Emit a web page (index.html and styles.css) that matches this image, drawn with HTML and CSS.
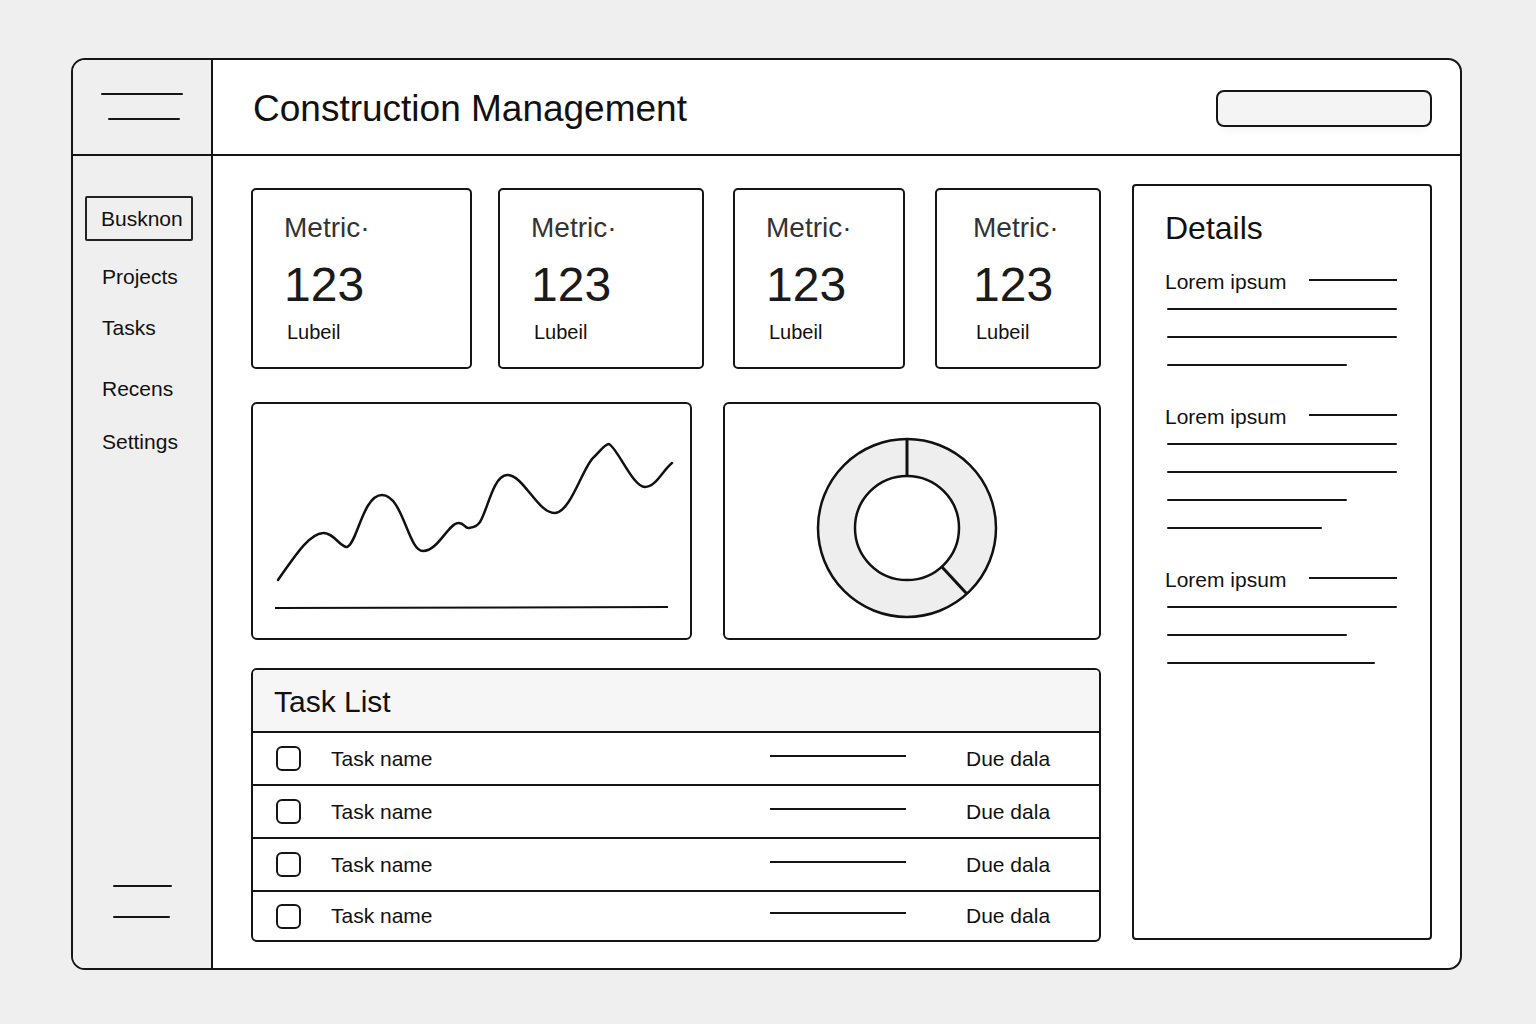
FILE: index.html
```html
<!DOCTYPE html>
<html lang="en">
<head>
<meta charset="utf-8">
<title>Construction Management</title>
<link rel="stylesheet" href="styles.css">
</head>
<body>
<div class="frame">
  <div class="side-top">
    <div class="hline hl-1"></div>
    <div class="hline hl-2"></div>
  </div>
  <header class="header">
    <h1 class="title">Construction Management</h1>
    <div class="search"></div>
  </header>
  <nav class="side-nav">
    <div class="nav-active">Busknon</div>
    <div class="nav-item">Projects</div>
    <div class="nav-item">Tasks</div>
    <div class="nav-item">Recens</div>
    <div class="nav-item">Settings</div>
    <div class="side-bottom">
      <div class="hline bl-1"></div>
      <div class="hline bl-2"></div>
    </div>
  </nav>
  <main class="content">
    <div class="left-col">
      <div class="metrics">
        <div class="metric m1">
          <div class="m-label">Metric·</div>
          <div class="m-value">123</div>
          <div class="m-sub">Lubeil</div>
        </div>
        <div class="metric m2">
          <div class="m-label">Metric·</div>
          <div class="m-value">123</div>
          <div class="m-sub">Lubeil</div>
        </div>
        <div class="metric m3">
          <div class="m-label">Metric·</div>
          <div class="m-value">123</div>
          <div class="m-sub">Lubeil</div>
        </div>
        <div class="metric m4">
          <div class="m-label">Metric·</div>
          <div class="m-value">123</div>
          <div class="m-sub">Lubeil</div>
        </div>
      </div>
      <div class="charts">
        <div class="card chart-line">
          <svg viewBox="0 0 437 234" width="437" height="234">
            <path d="M25,176 C40,155 55,130 70,129 C80,128 88,144 94,143 C104,140 110,91 129,91 C150,91 155,147 170,147 C185,147 195,120 205,119 C211,118 212,125 216,124 C222,123 224,122 227,118 C235,105 240,72 254,71 C270,70 285,110 302,109 C318,108 330,62 341,53 C348,46 352,40 356,40 C365,45 380,83 392,83 C403,83 410,66 419,59" fill="none" stroke="#111" stroke-width="2.5" stroke-linecap="round" stroke-linejoin="round"/>
            <line x1="22" y1="204" x2="415" y2="203" stroke="#111" stroke-width="2"/>
          </svg>
        </div>
        <div class="card chart-donut">
          <svg viewBox="0 0 374 234" width="374" height="234">
            <circle cx="182" cy="124" r="70.5" fill="none" stroke="#eeeeee" stroke-width="37"/>
            <circle cx="182" cy="124" r="89" fill="none" stroke="#111" stroke-width="2.5"/>
            <circle cx="182" cy="124" r="52" fill="#fff" stroke="#111" stroke-width="2.5"/>
            <line x1="182" y1="72" x2="182" y2="35" stroke="#111" stroke-width="3"/>
            <line x1="217" y1="163" x2="242" y2="190" stroke="#111" stroke-width="3"/>
          </svg>
        </div>
      </div>
      <div class="tasks">
        <div class="tasks-head">Task List</div>
        <div class="task-row">
          <span class="check"></span>
          <span class="task-name">Task name</span>
          <span class="task-line"></span>
          <span class="task-due">Due dala</span>
        </div>
        <div class="task-row">
          <span class="check"></span>
          <span class="task-name">Task name</span>
          <span class="task-line"></span>
          <span class="task-due">Due dala</span>
        </div>
        <div class="task-row">
          <span class="check"></span>
          <span class="task-name">Task name</span>
          <span class="task-line"></span>
          <span class="task-due">Due dala</span>
        </div>
        <div class="task-row">
          <span class="check"></span>
          <span class="task-name">Task name</span>
          <span class="task-line"></span>
          <span class="task-due">Due dala</span>
        </div>
      </div>
    </div>
    <aside class="details">
      <h2 class="details-title">Details</h2>
      <section class="d-section">
        <div class="d-head"><span>Lorem ipsum</span><span class="d-rule"></span></div>
        <div class="d-line full first"></div>
        <div class="d-line full"></div>
        <div class="d-line w180"></div>
      </section>
      <section class="d-section">
        <div class="d-head"><span>Lorem ipsum</span><span class="d-rule"></span></div>
        <div class="d-line full first"></div>
        <div class="d-line full"></div>
        <div class="d-line w180"></div>
        <div class="d-line w155"></div>
      </section>
      <section class="d-section">
        <div class="d-head"><span>Lorem ipsum</span><span class="d-rule"></span></div>
        <div class="d-line full first"></div>
        <div class="d-line w180"></div>
        <div class="d-line w208"></div>
      </section>
    </aside>
  </main>
</div>
</body>
</html>
```
FILE: styles.css
```css
* { box-sizing: border-box; }

html, body {
  margin: 0;
  padding: 0;
  background: #efefef;
  font-family: "Liberation Sans", Arial, sans-serif;
  color: #111;
}

.frame {
  margin: 58px 0 0 71px;
  width: 1391px;
  height: 912px;
  border: 2px solid #151515;
  border-radius: 14px;
  overflow: hidden;
  display: grid;
  grid-template-columns: 140px 1fr;
  grid-template-rows: 96px 1fr;
  background: #fff;
}

.hline {
  height: 2px;
  background: #151515;
  border-radius: 1px;
}

/* sidebar */
.side-top {
  background: #efefef;
  border-right: 2px solid #151515;
  border-bottom: 2px solid #151515;
  padding-top: 33px;
}
.hl-1 { width: 82px; margin-left: 28px; }
.hl-2 { width: 72px; margin-left: 35px; margin-top: 23px; }

.side-nav {
  background: #efefef;
  border-right: 2px solid #151515;
  display: flex;
  flex-direction: column;
  padding-top: 40px;
  padding-bottom: 50px;
}
.nav-active {
  margin-left: 12px;
  width: 108px;
  height: 45px;
  border: 2px solid #222;
  border-radius: 2px;
  font-size: 21px;
  line-height: 41px;
  padding-left: 14px;
}
.nav-item {
  font-size: 21px;
  line-height: 24px;
  padding-left: 29px;
}
.nav-item.n1 { margin-top: 24px; }
.nav-active + .nav-item { margin-top: 24px; }
.nav-active + .nav-item + .nav-item { margin-top: 27px; }
.nav-active + .nav-item + .nav-item + .nav-item { margin-top: 37px; }
.nav-active + .nav-item + .nav-item + .nav-item + .nav-item { margin-top: 29px; }

.side-bottom {
  margin-top: auto;
}
.bl-1 { width: 59px; margin-left: 40px; }
.bl-2 { width: 57px; margin-left: 40px; margin-top: 29px; }

/* header */
.header {
  border-bottom: 2px solid #151515;
  display: flex;
  align-items: center;
  justify-content: space-between;
  padding: 0 29px 0 40px;
}
.title {
  margin: 4px 0 0;
  font-size: 37px;
  font-weight: 400;
}
.search {
  width: 216px;
  height: 37px;
  border: 2px solid #151515;
  border-radius: 8px;
  background: #f4f4f4;
  margin-top: 2px;
  box-shadow: 0 10px 8px -6px rgba(0,0,0,0.04);
}

/* content */
.content {
  display: flex;
  gap: 31px;
  padding: 32px 29px 0 38px;
}
.left-col {
  width: 850px;
  display: flex;
  flex-direction: column;
}

.metrics {
  display: flex;
  height: 181px;
}
.metric {
  border: 2px solid #151515;
  border-radius: 5px;
  padding: 24px 0 0 31px;
  display: flex;
  flex-direction: column;
}
.m1 { width: 221px; }
.m2 { width: 206px; margin-left: 26px; }
.m3 { width: 172px; margin-left: 29px; }
.m4 { width: 166px; margin-left: 30px; padding-left: 36px; }
.m-label {
  font-size: 28px;
  line-height: 28px;
  color: #333;
}
.m-value {
  font-size: 48px;
  line-height: 56px;
  margin-top: 15px;
  color: #1a1a1a;
}
.m-sub {
  font-size: 20px;
  line-height: 24px;
  margin-top: 7px;
  padding-left: 3px;
}

.charts {
  display: flex;
  justify-content: space-between;
  margin-top: 33px;
  height: 238px;
}
.card {
  border: 2px solid #151515;
  border-radius: 6px;
  background: #fff;
}
.card svg { display: block; }
.chart-line { width: 441px; }
.chart-donut { width: 378px; }

.tasks {
  margin-top: 28px;
  border: 2px solid #151515;
  border-radius: 6px;
  overflow: hidden;
}
.tasks-head {
  height: 63px;
  background: #f6f6f6;
  border-bottom: 2px solid #151515;
  font-size: 30px;
  line-height: 63px;
  padding-left: 21px;
}
.task-row {
  height: 53px;
  display: flex;
  align-items: center;
  padding-left: 23px;
  border-bottom: 2px solid #151515;
  font-size: 21px;
}
.task-row:last-child { border-bottom: none; height: 48px; }
.check {
  width: 25px;
  height: 25px;
  border: 2.5px solid #151515;
  border-radius: 6px;
  flex: none;
}
.task-name {
  margin-left: 30px;
  flex: 1;
}
.task-line {
  width: 136px;
  height: 2px;
  background: #151515;
  margin-top: -6px;
}
.task-due {
  margin-left: 60px;
  width: 133px;
}

/* details */
.details {
  width: 300px;
  height: 756px;
  margin-top: -4px;
  border: 2px solid #151515;
  border-radius: 4px;
  padding: 24px 33px 0 31px;
}
.details-title {
  margin: 0;
  font-size: 32px;
  line-height: 36px;
  font-weight: 400;
}
.d-section { margin-top: 39px; }
.d-section:first-of-type { margin-top: 24px; }
.d-head {
  display: flex;
  align-items: center;
  justify-content: space-between;
  height: 24px;
  font-size: 21px;
}
.d-rule {
  width: 88px;
  height: 2px;
  background: #151515;
  margin-top: -4px;
}
.d-line {
  height: 2px;
  background: #151515;
  margin-top: 26px;
  margin-left: 2px;
  border-radius: 1px;
}
.d-line.first { margin-top: 14px; }
.d-line.full { width: 230px; }
.d-line.w180 { width: 180px; }
.d-line.w155 { width: 155px; }
.d-line.w208 { width: 208px; }
```
